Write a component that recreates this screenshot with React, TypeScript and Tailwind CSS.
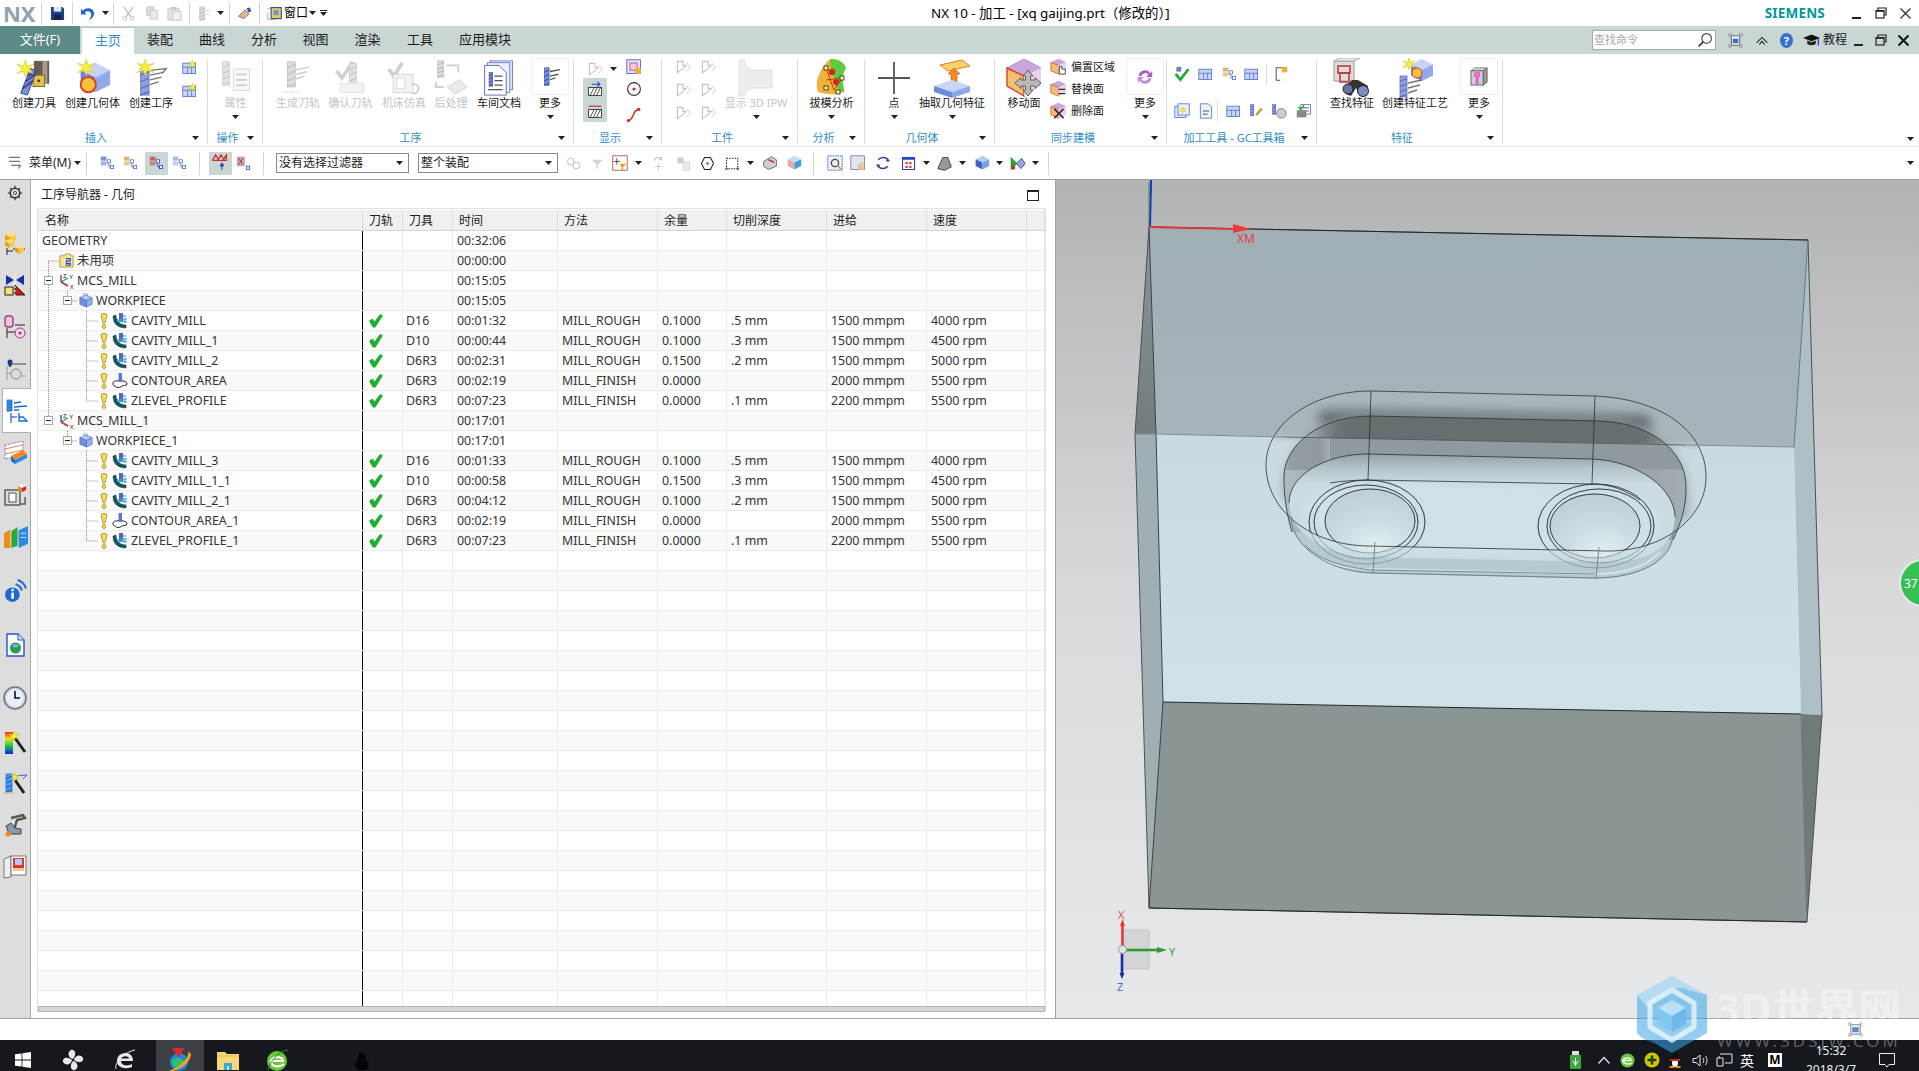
import React from 'react';

const Caret = ({ className = '' }: { className?: string }) => (
  <svg width="7" height="4" viewBox="0 0 7 4" className={`shrink-0 ${className}`}>
    <polygon points="0,0 7,0 3.5,4" fill="#222" />
  </svg>
);

type IcoProps = { s?: number; v?: number; c?: string; children?: React.ReactNode };
const Ico = ({ s = 16, v = 24, c = '', children }: IcoProps) => (
  <svg width={s} height={s} viewBox={`0 0 ${v} ${v}`} className={`block shrink-0 ${c}`}>
    {children}
  </svg>
);

// shared drawing bits
const Burst = ({ x, y, r = 6 }: { x: number; y: number; r?: number }) => (
  <g transform={`translate(${x} ${y})`}>
    <path
      d={`M0 ${-r} L${r * 0.25} ${-r * 0.3} L${r} ${-r * 0.5} L${r * 0.4} 0 L${r} ${r * 0.6} L${r * 0.2} ${r * 0.35} L0 ${r} L${-r * 0.25} ${r * 0.35} L${-r} ${r * 0.6} L${-r * 0.4} 0 L${-r} ${-r * 0.5} L${-r * 0.25} ${-r * 0.3}Z`}
      fill="#f6ee3c"
      stroke="#c9b92c"
      strokeWidth="0.5"
    />
  </g>
);
const Mill = ({ x, y, w = 7, h = 26, tip = '#5a6ab8', body = '#8f9ee0' }: { x: number; y: number; w?: number; h?: number; tip?: string; body?: string }) => (
  <g>
    <rect x={x} y={y} width={w} height={h} fill={body} stroke={tip} strokeWidth="0.7" />
    <path d={`M${x} ${y + h * 0.25} L${x + w} ${y + h * 0.12} M${x} ${y + h * 0.5} L${x + w} ${y + h * 0.37} M${x} ${y + h * 0.75} L${x + w} ${y + h * 0.62} M${x} ${y + h} L${x + w} ${y + h * 0.87}`} stroke={tip} strokeWidth="1.2" />
  </g>
);
const Cuts = ({ x, y, stroke = '#777' }: { x: number; y: number; stroke?: string }) => (
  <path d={`M${x} ${y + 3} L${x + 14} ${y} M${x} ${y + 8} L${x + 12} ${y + 5} M${x} ${y + 13} L${x + 9} ${y + 10}`} stroke={stroke} strokeWidth="1.4" fill="none" />
);
const Cube = ({ x, y, s, top = '#c7d2f6', left = '#6f86d8', right = '#93a7ec' }: { x: number; y: number; s: number; top?: string; left?: string; right?: string }) => (
  <g>
    <polygon points={`${x + s / 2},${y} ${x + s},${y + s * 0.25} ${x + s / 2},${y + s * 0.5} ${x},${y + s * 0.25}`} fill={top} />
    <polygon points={`${x},${y + s * 0.25} ${x + s / 2},${y + s * 0.5} ${x + s / 2},${y + s} ${x},${y + s * 0.75}`} fill={left} />
    <polygon points={`${x + s},${y + s * 0.25} ${x + s / 2},${y + s * 0.5} ${x + s / 2},${y + s} ${x + s},${y + s * 0.75}`} fill={right} />
  </g>
);

// ribbon icons, 40 unit box
const CreateTool = () => (
  <Ico s={38} v={40}>
    <rect x="20" y="2" width="16" height="24" fill="#6a5a52" />
    <rect x="29" y="2" width="5" height="24" fill="#a89a8c" />
    <rect x="19" y="17" width="12" height="12" fill="#e8c04a" stroke="#7a6a2a" />
    <circle cx="25" cy="23" r="1.5" fill="#333" />
    <path d="M6 36 L16 10 L23 12 L13 38Z" fill="#7f90da" stroke="#36468e" />
    <path d="M8 31 L19 23 M11 24 L21 16 M13 18 L22 13" stroke="#36468e" strokeWidth="2" />
    <Burst x={11} y={10} r={9} />
  </Ico>
);
const CreateGeom = () => (
  <Ico s={38} v={40}>
    <Cube x={7} y={4} s={31} />
    <circle cx="15" cy="27" r="8" fill="#f4c23d" stroke="#d8402a" strokeWidth="2" />
    <Burst x={13} y={9} r={9} />
  </Ico>
);
const CreateOp = () => (
  <Ico s={38} v={40}>
    <Mill x={9} y={10} w={9} h={28} />
    <Cuts x={19} y={14} />
    <path d="M19 12 L36 10 L32 15" stroke="#777" fill="none" strokeWidth="1.4" />
    <Burst x={14} y={9} r={9} />
  </Ico>
);
const Props = () => (
  <Ico s={36} v={40} c="opacity-40 grayscale">
    <Mill x={5} y={2} w={8} h={26} tip="#777" body="#bbb" />
    <rect x="17" y="10" width="18" height="24" fill="#eee" stroke="#999" />
    <path d="M20 16h12M20 22h12M20 28h12" stroke="#888" strokeWidth="2" />
  </Ico>
);
const GenPath = () => (
  <Ico s={36} v={40} c="opacity-40 grayscale">
    <Mill x={8} y={2} w={9} h={28} tip="#555" body="#aaa" />
    <Cuts x={18} y={8} />
    <path d="M3 36 L22 36" stroke="#aaa" strokeWidth="2" strokeDasharray="2 2" />
  </Ico>
);
const Verify = () => (
  <Ico s={36} v={40} c="opacity-35 grayscale">
    <path d="M4 12 L10 20 L22 2" stroke="#777" strokeWidth="4" fill="none" />
    <Mill x={18} y={4} w={8} h={26} tip="#555" body="#aaa" />
    <rect x="8" y="26" width="26" height="10" fill="#ddd" stroke="#aaa" />
  </Ico>
);
const Sim = () => (
  <Ico s={36} v={40} c="opacity-35 grayscale">
    <path d="M3 10 L9 18 L18 3" stroke="#777" strokeWidth="4" fill="none" />
    <rect x="8" y="16" width="22" height="20" fill="#ddd" stroke="#888" />
    <rect x="12" y="20" width="9" height="12" fill="#fff" stroke="#888" />
    <path d="M28 28a5 5 0 1 1 0 8" stroke="#777" strokeWidth="2" fill="none" />
  </Ico>
);
const Post = () => (
  <Ico s={36} v={40} c="opacity-40 grayscale">
    <Mill x={5} y={1} w={7} h={18} tip="#555" body="#aaa" />
    <path d="M15 6 H28 V14" stroke="#888" fill="none" strokeWidth="2" />
    <path d="M12 30 H3 V24" stroke="#888" fill="none" strokeWidth="2" />
    <polygon points="16,30 30,22 38,30 24,38" fill="#ccc" stroke="#888" />
  </Ico>
);
const ShopDoc = () => (
  <Ico s={36} v={40}>
    <rect x="10" y="1" width="25" height="32" fill="#dfe5fa" stroke="#6b7bc6" />
    <rect x="7" y="3" width="25" height="33" fill="#eef1fc" stroke="#6b7bc6" />
    <path d="M4 6 H20 L28 14 V39 H4Z" fill="#fff" stroke="#5263b8" />
    <Mill x={9} y={14} w={4} h={15} tip="#3f4fa6" body="#7d8ee0" />
    <path d="M15 18h9M15 23h9M15 28h9M8 33h16" stroke="#555" strokeWidth="1.4" />
  </Ico>
);
const MoreOp = () => (
  <Ico s={22} v={24}>
    <Mill x={6} y={2} w={5} h={19} tip="#3f4fa6" body="#7d8ee0" />
    <path d="M12 6 L23 4 M12 11 L21 9 M12 15 L18 13" stroke="#555" strokeWidth="1.4" />
  </Ico>
);
const Ipw = () => (
  <Ico s={40} v={40} c="opacity-35 grayscale">
    <path d="M3 2 H8 C10 12 18 12 20 12 H36 V30 H20 C14 30 10 32 8 38 H3Z" fill="#ccc" stroke="#aaa" />
  </Ico>
);
const Draft = () => (
  <Ico s={40} v={40}>
    <path d="M18 1 C28 1 32 5 34 10 C28 18 32 28 32 34 C22 38 12 36 6 34 C2 24 8 10 18 1Z" fill="#f2b13a" />
    <path d="M18 1 C28 1 32 5 34 10 C28 18 32 28 32 34 C28 34 22 28 22 20 C20 14 18 8 18 1Z" fill="#5ecb3e" />
    <path d="M14 10 L22 32 L30 20 L14 22" stroke="#a22" fill="none" strokeWidth="0.8" />
    <circle cx="20" cy="14" r="3.2" fill="#d7261e" />
    <circle cx="24" cy="24" r="3" fill="#d7261e" />
    {[[14, 10], [30, 20], [14, 30], [26, 34]].map(([x, y], i) => (
      <rect key={i} x={x - 2} y={y - 2} width="4" height="4" fill="#fff48a" stroke="#222" strokeWidth="0.8" />
    ))}
  </Ico>
);
const PointIco = () => (
  <Ico s={36} v={36}>
    <path d="M18 2 V34 M2 18 H34" stroke="#555" strokeWidth="1.8" />
  </Ico>
);
const Extract = () => (
  <Ico s={40} v={40}>
    <polygon points="8,7 30,2 38,8 16,13" fill="#fbd16e" stroke="#d9822b" />
    <path d="M19 26 V16 H16 L22 10 L28 16 H25 V26Z" fill="#f28a1e" stroke="#b25e10" strokeWidth="0.6" />
    <polygon points="2,28 20,22 38,28 20,34" fill="#c7d6f4" />
    <polygon points="2,28 20,34 20,40 2,34" fill="#6f8bdc" />
    <polygon points="38,28 20,34 20,40 38,34" fill="#8ea6ea" />
  </Ico>
);
const MoveFace = () => (
  <Ico s={40} v={40}>
    <polygon points="20,1 37,10 20,18 3,10" fill="#c9a7dd" stroke="#b58bd0" />
    <polygon points="3,10 20,18 20,38 3,28" fill="#f0c070" stroke="#d9402a" strokeWidth="1.4" />
    <polygon points="37,10 20,18 20,38 37,28" fill="#e9d3f0" />
    <path d="M24 12 L29 18 H26.5 V22 H31 V19.5 L37 25 L31 30.5 V28 H26.5 V32 H29 L24 38 L19 32 H21.5 V28 H17 V30.5 L11 25 L17 19.5 V22 H21.5 V18 H19Z" fill="#b9b9b9" stroke="#555" strokeWidth="0.9" />
  </Ico>
);
const FaceSmall = ({ kind }: { kind: 'hand' | 'swap' | 'x' }) => (
  <Ico s={17} v={20}>
    <polygon points="10,1 19,5 10,9 1,5" fill="#c9a7dd" />
    <polygon points="1,5 10,9 10,19 1,15" fill="#f0c070" stroke="#d9402a" strokeWidth="0.8" />
    <polygon points="19,5 10,9 10,19 19,15" fill="#e9d3f0" />
    {kind === 'hand' && <path d="M11 19 V10 H14 V13 H18 V19Z" fill="#fff" stroke="#333" />}
    {kind === 'swap' && <path d="M10 11 H18 M10 16 H18" stroke="#333" strokeWidth="1.6" />}
    {kind === 'x' && <path d="M5 8 L16 19 M16 8 L5 19" stroke="#333" strokeWidth="2" />}
  </Ico>
);
const Refresh = () => (
  <Ico s={18} v={20}>
    <path d="M3 9 A7 7 0 0 1 16 6 L18 3 V10 H11 L14 7.5 A4.5 4.5 0 0 0 6 9Z" fill="#a95bc9" />
    <path d="M17 11 A7 7 0 0 1 4 14 L2 17 V10 H9 L6 12.5 A4.5 4.5 0 0 0 14 11Z" fill="#c58ae0" />
  </Ico>
);
const FindFeature = () => (
  <Ico s={40} v={40}>
    <rect x="2" y="3" width="20" height="20" fill="#ddd" stroke="#999" />
    <polygon points="2,3 8,0 28,0 22,3" fill="#eee" stroke="#aaa" />
    <rect x="6" y="8" width="12" height="7" fill="none" stroke="#c23a3a" strokeWidth="1.6" />
    <rect x="8" y="15" width="9" height="9" fill="none" stroke="#c23a3a" strokeWidth="1.6" />
    <path d="M12 30 L20 22 H26 L36 28 L35 38 L28 38 L24 30 L19 38 L14 36Z" fill="#333" />
    <circle cx="16" cy="31" r="5" fill="#6673a8" stroke="#222" />
    <circle cx="31" cy="33" r="5.5" fill="#7f8cc4" stroke="#222" />
  </Ico>
);
const CreateFeatureProc = () => (
  <Ico s={40} v={40}>
    <Cube x={16} y={1} s={22} />
    <circle cx="22" cy="15" r="5" fill="#f4c23d" stroke="#d8402a" />
    <Burst x={14} y={6} r={6} />
    <Mill x={5} y={18} w={7} h={21} />
    <Cuts x={13} y={22} />
  </Ico>
);
const MoreFeature = () => (
  <Ico s={19} v={20}>
    <polygon points="1,4 5,1 18,1 14,4" fill="#ddd" stroke="#777" />
    <rect x="1" y="4" width="13" height="15" fill="#cfcfcf" stroke="#666" />
    <polygon points="14,4 18,1 18,16 14,19" fill="#9a9a9a" stroke="#666" />
    <path d="M5 6 H10 V10 H8.5 V18 H6.5 V10 H5Z" fill="#ff70e0" stroke="#d820c0" strokeWidth="0.6" />
  </Ico>
);

// small ribbon and toolbar icons
const TinyTree = ({ a = '#4f6fd0', b = '#4f6fd0' }: { a?: string; b?: string }) => (
  <Ico s={16} v={20}>
    <rect x="1" y="2" width="7" height="5" fill={a} opacity=".75" />
    <rect x="1" y="8" width="7" height="5" fill={a} opacity=".55" />
    <rect x="9" y="6" width="4" height="4" fill="#fff" stroke={b} />
    <rect x="13" y="13" width="4" height="4" fill="#fff" stroke={b} />
    <path d="M11 10 V15 H13" stroke={b} fill="none" />
  </Ico>
);
const Block = ({ s = 16, star = false }: { s?: number; star?: boolean }) => (
  <Ico s={s} v={20}>
    <rect x="1" y="4" width="16" height="13" fill="#c9d6f2" stroke="#4f6fd0" />
    <path d="M1 9h16M7 9v8M12 9v8" stroke="#4f6fd0" />
    {star && <Burst x={13} y={5} r={5} />}
  </Ico>
);
const Flag = ({ c = '#888' }: { c?: string }) => (
  <Ico s={16} v={20} c="opacity-50">
    <path d="M3 3 H10 V8 H14 L10 12 L3 17Z" fill="none" stroke={c} strokeWidth="1.4" />
    <path d="M15 5 L19 10 L15 15" stroke={c} fill="none" />
  </Ico>
);
const Row = ({ children, on = false }: { children: React.ReactNode; on?: boolean }) => (
  <div className={`flex h-[22px] w-[24px] items-center justify-center ${on ? 'bg-[#c8d6d4]' : ''}`}>{children}</div>
);

const Group = ({ w, label, arrow = true, children }: { w: string; label: string; arrow?: boolean; children: React.ReactNode }) => (
  <div className={`flex h-[85px] shrink-0 flex-col border-r border-[#dcdcdc] ${w}`}>
    <div className="flex h-[71px]">{children}</div>
    <div className="flex h-[14px] items-center">
      <span className="flex-1 whitespace-nowrap text-center text-[11px] leading-[16px] text-[#2d8fc6] pt-[2px]">{label}</span>
      {arrow && <Caret className="mr-[8px] mt-[2px]" />}
    </div>
  </div>
);

const Big = ({ w, label, off = false, caret = false, boxed = false, children }: { w: string; label: string; off?: boolean; caret?: boolean; boxed?: boolean; children: React.ReactNode }) => (
  <div className={`flex shrink-0 flex-col items-center ${w}`}>
    <div className={`flex h-[37px] items-center justify-center ${boxed ? 'w-[38px] h-[36px] rounded-[3px] border border-[#eeeeee] mb-[1px] -mt-[1px]' : ''}`}>{children}</div>
    <div className={`h-[14px] whitespace-nowrap text-[11px] leading-[14px] ${off ? 'text-[#c4c4c4]' : 'text-[#1a1a1a]'}`}>{label}</div>
    <div className="flex h-[14px] items-center">{caret && <Caret />}</div>
  </div>
);

const Ribbon = () => (
  <div className="flex h-[93px] border-b border-[#e2e2e2] bg-white pt-[5px]">
    <Group w="w-[208px]" label="插入">
      <div className="w-[5px]" />
      <Big w="w-[58px]" label="创建刀具"><CreateTool /></Big>
      <Big w="w-[59px]" label="创建几何体"><CreateGeom /></Big>
      <Big w="w-[58px]" label="创建工序"><CreateOp /></Big>
      <div className="flex w-[20px] flex-col items-center gap-[7px] pt-[1px]">
        <Block star />
        <Block star />
      </div>
    </Group>
    <Group w="w-[55px]" label="操作">
      <Big w="w-[55px]" label="属性" off caret><Props /></Big>
    </Group>
    <Group w="w-[311px]" label="工序">
      <div className="w-[9px]" />
      <Big w="w-[52px]" label="生成刀轨" off><GenPath /></Big>
      <Big w="w-[53px]" label="确认刀轨" off><Verify /></Big>
      <Big w="w-[54px]" label="机床仿真" off><Sim /></Big>
      <Big w="w-[40px]" label="后处理" off><Post /></Big>
      <Big w="w-[56px]" label="车间文档"><ShopDoc /></Big>
      <Big w="w-[46px]" label="更多" caret boxed><MoreOp /></Big>
    </Group>
    <Group w="w-[88px]" label="显示">
      <div className="w-[9px]" />
      <div className="flex w-[24px] flex-col">
        <div className="flex h-[19px] items-center justify-center"><Flag /></div>
        <Row on>
          <Ico s={16} v={20}><rect x="2" y="8" width="16" height="10" fill="#fff" stroke="#222" /><path d="M4 18 L9 8 M8 18 L13 8 M12 18 L17 8" stroke="#222" /><path d="M6 4 H16 M13 1 L16 4 L13 7" stroke="#2346c0" fill="none" strokeWidth="1.4" /></Ico>
        </Row>
        <Row on>
          <Ico s={16} v={20}><rect x="2" y="8" width="16" height="10" fill="#fff" stroke="#222" /><path d="M4 18 L9 8 M8 18 L13 8 M12 18 L17 8" stroke="#222" /><path d="M2 4 H18" stroke="#d02a2a" strokeWidth="1.4" /></Ico>
        </Row>
      </div>
      <Caret className="mt-[8px] ml-[3px]" />
      <div className="ml-[5px] flex w-[24px] flex-col items-center gap-[6px]">
        <Ico s={16} v={20}><rect x="1" y="1" width="17" height="17" fill="#dfe6fb" stroke="#3c55c4" /><rect x="5" y="5" width="9" height="9" fill="#f6c8d8" stroke="#c23a7a" /><circle cx="15" cy="15" r="4" fill="#e8b03c" /></Ico>
        <Ico s={16} v={20}><circle cx="10" cy="10" r="8" fill="#fff" stroke="#333" strokeWidth="1.4" /><circle cx="10" cy="10" r="2" fill="#d02a2a" /></Ico>
        <Ico s={16} v={20} c="mt-[4px]"><path d="M3 17 C10 17 8 3 16 3" stroke="#b5451f" strokeWidth="2" fill="none" /><circle cx="3" cy="17" r="2" fill="#d02a2a" /><circle cx="16" cy="3" r="2" fill="#d02a2a" /></Ico>
      </div>
    </Group>
    <Group w="w-[136px]" label="工件">
      <div className="w-[11px]" />
      <div className="flex w-[20px] flex-col items-center gap-[7px]"><Flag /><Flag /><Flag /></div>
      <div className="ml-[5px] flex w-[20px] flex-col items-center gap-[7px]"><Flag /><Flag /><Flag /></div>
      <Big w="w-[76px]" label="显示 3D IPW" off caret><Ipw /></Big>
    </Group>
    <Group w="w-[67px]" label="分析">
      <Big w="w-[67px]" label="拔模分析" caret><Draft /></Big>
    </Group>
    <Group w="w-[130px]" label="几何体">
      <div className="w-[6px]" />
      <Big w="w-[46px]" label="点" caret><PointIco /></Big>
      <Big w="w-[70px]" label="抽取几何特征" caret><Extract /></Big>
    </Group>
    <Group w="w-[172px]" label="同步建模">
      <div className="w-[3px]" />
      <Big w="w-[52px]" label="移动面"><MoveFace /></Big>
      <div className="-mt-[1px] flex w-[72px] flex-col gap-[5px]">
        {([['hand', '偏置区域'], ['swap', '替换面'], ['x', '删除面']] as const).map(([k, t]) => (
          <div key={t} className="flex items-center gap-[4px] text-[11px] leading-[17px] text-[#1a1a1a]">
            <FaceSmall kind={k} />
            <span>{t}</span>
          </div>
        ))}
      </div>
      <div className="w-[4px]" />
      <Big w="w-[38px]" label="更多" caret boxed><Refresh /></Big>
    </Group>
    <Group w="w-[150px]" label="加工工具 - GC工具箱">
      <div className="flex flex-col gap-[17px] pl-[7px] pt-[5px]">
        <div className="flex items-center">
          <Ico s={16} v={20}><path d="M2 10 L8 17 L18 4" stroke="#27a83a" strokeWidth="3.4" fill="none" /><rect x="3" y="1" width="6" height="6" fill="#6b7bc6" /></Ico>
          <div className="ml-[8px]"><Block /></div>
          <div className="ml-[8px]"><TinyTree a="#c9a23c" /></div>
          <div className="ml-[6px]"><Block /></div>
          <div className="ml-[6px] h-[20px] w-px bg-[#dddddd]" />
          <div className="ml-[6px]"><Ico s={16} v={20}><path d="M4 2 V18 M4 2 H12 M4 18 H9" stroke="#777" strokeWidth="1.6" /><rect x="11" y="1" width="7" height="7" fill="#e8b03c" /></Ico></div>
        </div>
        <div className="flex items-center">
          <Ico s={16} v={20}><rect x="1" y="4" width="14" height="14" fill="#dfe6fb" stroke="#4f6fd0" /><rect x="5" y="1" width="14" height="14" fill="#eef1fc" stroke="#4f6fd0" /><Burst x={11} y={9} r={4} /></Ico>
          <div className="ml-[8px]"><Ico s={16} v={20}><path d="M3 1 H13 L17 5 V19 H3Z" fill="#eef1fc" stroke="#4f6fd0" /><path d="M6 10h8M6 14h6" stroke="#333" /></Ico></div>
          <div className="ml-[3px] h-[20px] w-px bg-[#dddddd]" />
          <div className="ml-[8px]"><Block /></div>
          <div className="ml-[7px]"><Ico s={16} v={20}><Mill x={2} y={2} w={4} h={14} /><path d="M9 15 L16 7" stroke="#c79a2c" strokeWidth="3" /></Ico></div>
          <div className="ml-[6px]"><Ico s={16} v={20}><Mill x={2} y={2} w={4} h={12} /><circle cx="13" cy="13" r="6" fill="#ccc" stroke="#777" /></Ico></div>
          <div className="ml-[9px]"><Ico s={16} v={20}><rect x="6" y="2" width="12" height="12" fill="#fff" stroke="#4f6fd0" /><path d="M8 6h8M8 10h8" stroke="#333" /><rect x="1" y="9" width="12" height="9" fill="#888" /><path d="M3 5 L6 8 L10 3" stroke="#27a83a" strokeWidth="2" fill="none" /></Ico></div>
        </div>
      </div>
    </Group>
    <Group w="w-[186px]" label="特征">
      <div className="w-[9px]" />
      <Big w="w-[52px]" label="查找特征"><FindFeature /></Big>
      <Big w="w-[74px]" label="创建特征工艺"><CreateFeatureProc /></Big>
      <div className="w-[8px]" />
      <Big w="w-[38px]" label="更多" caret boxed><MoreFeature /></Big>
    </Group>
    <div className="flex flex-1 items-end justify-end pb-[5px] pr-[5px]"><Caret /></div>
  </div>
);

const Sep = () => <div className="h-[23px] w-px shrink-0 bg-[#d4d4d4]" />;

const TitleBar = () => (
  <div className="relative flex h-[26px] items-center bg-white">
    <span className="ml-[3px] w-[38px] text-[22px] font-bold leading-[26px] tracking-[-0.2px] text-[#8fa3af]">NX</span>
    <Sep />
    <div className="flex w-[30px] justify-center">
      <Ico s={15} v={16}><path d="M1 1 H13 L15 3 V15 H1Z" fill="#1f3f86" /><rect x="4" y="1" width="8" height="5" fill="#dfe6f6" /><rect x="4" y="9" width="8" height="6" fill="#15264f" /></Ico>
    </div>
    <Sep />
    <div className="flex w-[29px] justify-center">
      <Ico s={15} v={16}><path d="M1 3 V9 H7 L5 7 C8 4 12 6 12 9 C12 11 11 13 9 15 C13 14 15 11 15 8 C15 3 8 0 3 5Z" fill="#2566c8" /></Ico>
    </div>
    <Caret className="mr-[4px]" />
    <Sep />
    <div className="flex w-[28px] justify-center">
      <Ico s={15} v={16} c="opacity-40"><path d="M3 1 L11 12 M13 1 L5 12" stroke="#666" strokeWidth="1.4" /><circle cx="4" cy="13" r="2" fill="none" stroke="#666" /><circle cx="12" cy="13" r="2" fill="none" stroke="#666" /></Ico>
    </div>
    <div className="flex w-[20px] justify-center">
      <Ico s={14} v={16} c="opacity-40"><rect x="2" y="1" width="8" height="10" fill="#aaa" stroke="#777" /><rect x="6" y="5" width="8" height="10" fill="#ccc" stroke="#777" /></Ico>
    </div>
    <div className="flex w-[24px] justify-center">
      <Ico s={15} v={16} c="opacity-40"><rect x="1" y="3" width="12" height="12" fill="#bbb" stroke="#777" /><rect x="6" y="6" width="9" height="9" fill="#ddd" stroke="#777" /><rect x="4" y="1" width="6" height="3" fill="#777" /></Ico>
    </div>
    <div className="w-[3px]" />
    <Sep />
    <div className="flex w-[26px] justify-center"><Ico s={15} v={16} c="opacity-40"><Mill x={4} y={1} w={5} h={14} tip="#666" body="#aaa" /><path d="M10 5h5M10 9h4" stroke="#888" /></Ico></div>
    <Caret className="ml-[1px] mr-[5px]" />
    <Sep />
    <div className="flex w-[29px] justify-center">
      <Ico s={16} v={20}><path d="M2 14 L10 6 L15 11 L9 17Z" fill="#dcb98c" stroke="#7a5a3a" /><path d="M12 4 L16 3 L18 8 L14 9Z" fill="#2f56b8" /></Ico>
    </div>
    <Sep />
    <div className="ml-[6px]">
      <Ico s={17} v={20}><path d="M2 4 H12 M2 9 V17 H12" stroke="#888" strokeDasharray="2 1" fill="none" /><rect x="6" y="3" width="12" height="13" fill="#f6c94a" stroke="#2f56b8" strokeWidth="1.4" /><rect x="9" y="6" width="6" height="6" fill="#5f9be8" /></Ico>
    </div>
    <span className="ml-[1px] text-[12px] text-black">窗口</span>
    <Caret className="ml-[1px]" />
    <svg width="7" height="6" viewBox="0 0 7 6" className="ml-[4px]"><path d="M0 .5 H7" stroke="#222" /><polygon points="0,2 7,2 3.5,6" fill="#222" /></svg>
    <span className="absolute left-[931px] top-[3px] whitespace-nowrap font-['Noto_Sans','Noto_Sans_CJK_TC',sans-serif] text-[13.4px] leading-[20px] text-black">NX 10 - 加工 - [xq gaijing.prt（修改的）]</span>
    <span className="ml-auto mr-[26px] text-[13.5px] font-bold leading-[26px] tracking-[0.2px] text-[#009999]">SIEMENS</span>
    <WinBtns light />
  </div>
);

const WinBtns = ({ light = false }: { light?: boolean }) => (
  <div className={`flex items-center ${light ? 'gap-[12px] pr-[7px]' : 'gap-[10px] pr-[9px]'}`}>
    <svg width="12" height="12" viewBox="0 0 12 12"><path d="M1 11 H10" stroke="#222" strokeWidth="2" /></svg>
    <svg width="12" height="12" viewBox="0 0 12 12"><path d="M3 3 V1 H11 V8 H9" fill="none" stroke="#222" strokeWidth="1.2" /><rect x="1" y="3.6" width="8" height="7.4" fill="none" stroke="#222" strokeWidth="1.2" /><path d="M1 4 H9" stroke="#222" strokeWidth="1.6" /></svg>
    <svg width="13" height="13" viewBox="0 0 13 13"><path d="M1.5 1.5 L11.5 11.5 M11.5 1.5 L1.5 11.5" stroke={light ? '#333' : '#111'} strokeWidth={light ? 1.3 : 1.9} /></svg>
  </div>
);

const TabBar = () => {
  const tabs: [string, string][] = [
    ['装配', 'w-[52px]'],
    ['曲线', 'w-[52px]'],
    ['分析', 'w-[52px]'],
    ['视图', 'w-[51px]'],
    ['渲染', 'w-[53px]'],
    ['工具', 'w-[52px]'],
    ['应用模块', 'w-[78px]'],
  ];
  return (
    <div className="flex h-[28px] items-stretch bg-[#c8d6d4] text-[13px]">
      <div className="flex w-[80px] items-center justify-center bg-[#5c8a84] text-white">文件(F)</div>
      <div className="w-[2px]" />
      <div className="mt-px flex w-[52px] items-center justify-center border-t border-[#b9c5c3] bg-white text-[#2d8fc6]">主页</div>
      {tabs.map(([t, w]) => (
        <div key={t} className={`flex items-center justify-center text-[#1a1a1a] ${w}`}>{t}</div>
      ))}
      <div className="ml-auto flex items-center">
        <div className="flex h-[20px] w-[124px] items-center justify-between border border-[#a9a9a9] bg-white pl-[1px] pr-[2px] text-[11px] text-[#a8a8a8]">
          <span>查找命令</span>
          <Ico s={16} v={20}><circle cx="12" cy="8" r="6" fill="#fff" stroke="#444" strokeWidth="1.4" /><path d="M8 12 L2 18" stroke="#444" strokeWidth="2.4" /></Ico>
        </div>
        <div className="ml-[12px]"><Ico s={15} v={16}><path d="M1 4 V1 H4 M12 1 H15 V4 M15 12 V15 H12 M4 15 H1 V12" stroke="#888" fill="none" /><rect x="3.5" y="3" width="9" height="10" fill="#fff" stroke="#555" /><rect x="5" y="6" width="6" height="5" fill="#3a70c8" /></Ico></div>
        <div className="ml-[12px]"><Ico s={14} v={16}><path d="M2 11 L8 5 L14 11 M5 13 L8 9.5 L11 13" stroke="#222" strokeWidth="1.2" fill="none" /></Ico></div>
        <div className="ml-[11px] flex h-[15px] w-[13px] items-center justify-center rounded-[50%] bg-[#3a6fd0] text-[11px] font-bold leading-none text-white">?</div>
        <div className="ml-[10px]"><Ico s={17} v={20}><path d="M0 7 L10 3 L20 7 L10 11Z" fill="#111" /><path d="M5 10 V14 C8 16 12 16 15 14 V10 L10 12Z" fill="#222" /><path d="M18 7 V16" stroke="#1c3fd0" strokeWidth="1.5" /></Ico></div>
        <span className="ml-[3px] text-[12px] text-[#1a1a1a]">教程</span>
        <div className="ml-[6px]"><WinBtns /></div>
      </div>
    </div>
  );
};

const Hi = ({ children }: { children: React.ReactNode }) => (
  <div className="flex h-[23px] w-[23px] items-center justify-center bg-[#c8d6d4]">{children}</div>
);

const Combo = ({ w, text }: { w: string; text: string }) => (
  <div className={`flex h-[20px] items-center justify-between border border-[#8a8a8a] bg-white pl-[2px] pr-[5px] text-[12px] text-[#1a1a1a] ${w}`}>
    <span>{text}</span>
    <Caret />
  </div>
);

const Slot = ({ w, children, c = '' }: { w: string; children?: React.ReactNode; c?: string }) => (
  <div className={`flex shrink-0 items-center justify-center ${w} ${c}`}>{children}</div>
);

const Toolbar = () => (
  <div className="flex h-[33px] items-center border-b border-[#9f9f9f] bg-white">
    <div className="w-[8px]" />
    <Ico s={16} v={20}><path d="M1 3 H15 M1 8 H15 M4 13 H13" stroke="#777" strokeWidth="1.6" /><path d="M13 11 L17 13 L13 18Z" fill="#888" /></Ico>
    <span className="ml-[5px] text-[12px] text-[#1a1a1a]">菜单(M)</span>
    <Caret className="ml-[3px]" />
    <div className="w-[5px]" />
    <Sep />
    <div className="ml-[13px]"><TinyTree /></div>
    <div className="ml-[7px]"><TinyTree a="#c9a23c" /></div>
    <div className="ml-[6px]"><Hi><TinyTree a="#d23a3a" b="#2346c0" /></Hi></div>
    <div className="ml-[4px]"><TinyTree a="#8fa3e0" /></div>
    <div className="w-[11px]" />
    <Sep />
    <div className="ml-[9px]"><Hi><Ico s={18} v={20}><path d="M1 6 L4 1 L7 6 L10 1 L13 6 L16 1 V7 H1Z" fill="none" stroke="#d02a2a" strokeWidth="1.4" /><path d="M11 9 V18" stroke="#2346c0" /><rect x="9" y="11" width="4" height="3" fill="#2346c0" /></Ico></Hi></div>
    <div className="ml-[4px]"><Ico s={16} v={20}><rect x="1" y="2" width="10" height="12" fill="#b87a8a" opacity=".7" /><path d="M3 4 L9 12 M9 4 L3 12" stroke="#8a2a3a" /><rect x="13" y="14" width="4" height="4" fill="#fff" stroke="#2346c0" /></Ico></div>
    <div className="w-[11px]" />
    <Sep />
    <div className="w-[12px]" />
    <Combo w="w-[133px]" text="没有选择过滤器" />
    <div className="w-[9px]" />
    <Combo w="w-[140px]" text="整个装配" />
    <div className="w-[8px]" />
    <Ico s={16} v={20} c="opacity-35"><circle cx="6" cy="8" r="4" fill="none" stroke="#666" strokeWidth="1.4" /><circle cx="13" cy="13" r="4" fill="none" stroke="#666" strokeWidth="1.4" /></Ico>
    <div className="w-[8px]" /><Ico s={16} v={20} c="opacity-35"><path d="M2 6 H16 L10 12 V18 L8 16 V12Z" fill="#888" /></Ico>
    <div className="w-[6px]" />
    <Ico s={16} v={20}><rect x="1" y="1" width="18" height="18" fill="#fff" stroke="#c43a3a" /><path d="M6 4 V12 M2 8 H10" stroke="#333" /><path d="M9 11 H18 L14 15 V19 H12 V15Z" fill="#e8a020" /></Ico>
    <Caret className="ml-[7px]" />
    <div className="w-[9px]" />
    <Ico s={15} v={20} c="opacity-40"><path d="M4 6 C6 1 12 1 14 5 M14 1 V5 H10" stroke="#666" fill="none" strokeWidth="1.4" /><path d="M10 9 V19 M5 14 H15" stroke="#666" /></Ico>
    <div className="w-[10px]" /><Ico s={15} v={20} c="opacity-40"><rect x="2" y="2" width="8" height="8" fill="#888" /><rect x="10" y="8" width="8" height="11" fill="#ccc" stroke="#888" /></Ico>
    <div className="w-[9px]" /><Ico s={15} v={20}><polygon points="6,2 14,2 18,10 14,18 6,18 2,10" fill="#fff" stroke="#222" strokeWidth="1.4" /><circle cx="10" cy="10" r="1.6" fill="#d02a2a" /></Ico>
    <div className="w-[10px]" /><Ico s={15} v={20}><rect x="2" y="3" width="15" height="14" fill="none" stroke="#222" strokeDasharray="2 1.6" strokeWidth="1.4" /><circle cx="17" cy="17" r="1.6" fill="#d02a2a" /><circle cx="2" cy="17" r="1.6" fill="#d02a2a" /></Ico>
    <Caret className="ml-[7px]" />
    <div className="w-[8px]" /><Ico s={16} v={20}><polygon points="2,8 12,2 18,6 18,14 8,18 2,14" fill="#cfcfcf" stroke="#555" /><path d="M8 6 L15 9" stroke="#c23a3a" strokeWidth="2" /></Ico>
    <div className="w-[8px]" /><Ico s={16} v={20}><Cube x={2} y={1} s={17} top="#bfe0f6" left="#e8a8a8" right="#4a98de" /></Ico>
    <div className="w-[11px]" />
    <Sep />
    <div className="w-[13px]" />
    <Ico s={16} v={20}><rect x="1" y="1" width="18" height="18" fill="#eef1fc" stroke="#2346c0" strokeDasharray="2 1" /><circle cx="10" cy="10" r="4.5" fill="none" stroke="#444" strokeWidth="1.6" /><path d="M13 13 L18 18" stroke="#c9a23c" strokeWidth="2" /></Ico>
    <div className="w-[7px]" /><Ico s={16} v={20}><rect x="1" y="1" width="17" height="17" fill="#dfe5f2" stroke="#778" /><path d="M10 18 V11 H13 V9 H17 V19Z" fill="#e8c39a" /></Ico>
    <div className="w-[9px]" /><Ico s={16} v={20}><path d="M4 6 A8 8 0 0 1 17 7 L14 7 M16 14 A8 8 0 0 1 3 13 L6 13" fill="none" stroke="#33488e" strokeWidth="2" /></Ico>
    <div className="w-[10px]" /><Ico s={15} v={20}><rect x="2" y="2" width="16" height="16" fill="#fff" stroke="#2346c0" strokeWidth="1.4" /><rect x="2" y="2" width="16" height="3" fill="#2346c0" /><path d="M6 8h3v3H6zM11 8h3v3h-3zM6 13h3v3H6zM11 13h3v3h-3z" fill="#e03a2a" /></Ico>
    <Caret className="ml-[7px]" />
    <div className="w-[6px]" /><Ico s={17} v={20}><polygon points="2,16 8,3 14,3 18,14 10,18" fill="#999" stroke="#333" /></Ico>
    <Caret className="ml-[6px]" />
    <div className="w-[8px]" /><Ico s={16} v={20}><Cube x={2} y={1} s={17} top="#b7cdf2" left="#3f64c0" right="#7aa0e8" /></Ico>
    <Caret className="ml-[6px]" />
    <div className="w-[6px]" /><Ico s={17} v={20}><path d="M2 2 V18 L10 10Z" fill="#2ba03a" /><path d="M9 10 L15 4 L19 10 L14 16Z" fill="#8fa8e8" stroke="#445" /><circle cx="5" cy="15" r="2.4" fill="#d02a2a" /></Ico>
    <Caret className="ml-[6px]" />
    <div className="w-[9px]" />
    <Sep />
    <div className="ml-auto pr-[5px]"><Caret /></div>
  </div>
);

// left resource bar
const railItems: { h: string; node: React.ReactNode; on?: boolean }[] = [
  { h: 'h-[24px]', node: <Ico s={16} v={20}><circle cx="10" cy="10" r="6" fill="none" stroke="#333" strokeWidth="2" /><circle cx="10" cy="10" r="2" fill="none" stroke="#333" /><path d="M10 1v3M10 16v3M1 10h3M16 10h3M4 4l2 2M14 14l2 2M16 4l-2 2M4 16l2-2" stroke="#333" strokeWidth="1.5" /></Ico> },
  { h: 'mt-[17px] h-[42px]', node: <Ico s={24} v={24}><Cube x={2} y={1} s={11} top="#fbe27a" left="#e8a020" right="#f6c94a" /><Cube x={2} y={8} s={9} top="#fbe27a" left="#e8a020" right="#f6c94a" /><path d="M10 18 H22 M4 17 V24 M4 20 H10" stroke="#222" /><Cube x={12} y={14} s={9} top="#fbe27a" left="#e8a020" right="#f6c94a" /></Ico> },
  { h: 'h-[42px]', node: <Ico s={24} v={24}><path d="M3 2 L11 7 L3 12Z M21 2 L13 7 L21 12Z" fill="#1432a8" /><rect x="2" y="14" width="8" height="8" fill="#f6e27a" stroke="#222" /><path d="M12 22 L12 12 L22 22Z" fill="#cc1a10" stroke="#222" /><path d="M12 1 V24" stroke="#fff" strokeDasharray="2 2" /></Ico> },
  { h: 'h-[42px]', node: <Ico s={24} v={24}><rect x="2" y="1" width="8" height="11" rx="3" fill="#e8c8d8" stroke="#a03a7a" strokeWidth="1.4" /><path d="M12 10 H22 M4 13 V23 M4 17 H12" stroke="#222" /><circle cx="17" cy="18" r="5" fill="#f6d8e8" stroke="#a03a7a" /><circle cx="17" cy="18" r="1.6" fill="#a03a7a" /></Ico> },
  { h: 'mt-[4px] h-[36px]', node: <Ico s={24} v={24}><circle cx="7" cy="4" r="2.5" fill="#1432a8" /><path d="M5 6 H9 L7 9Z M9 6 H23" stroke="#444" fill="#1432a8" /><path d="M4 8 V22 M4 15 H8" stroke="#999" /><circle cx="13" cy="16" r="5" fill="#ddd" stroke="#888" /><path d="M17 18 H23" stroke="#aaa" /></Ico> },
  { h: 'h-[45px]', on: true, node: <Ico s={24} v={24}><Mill x={2} y={1} w={5} h={11} tip="#1a6ad0" body="#4a9ae8" /><path d="M9 4 L16 3 M9 8 L22 7 M9 11 H14" stroke="#1a6ad0" strokeWidth="1.4" /><path d="M6 14 V24 M6 18 H12" stroke="#1432a8" /><path d="M14 14 V22 H22 L18 18 H14" fill="none" stroke="#1a6ad0" strokeWidth="1.4" /></Ico> },
  { h: 'h-[40px]', node: <Ico s={24} v={24}><path d="M2 4 L20 0 V14 L2 18Z" fill="#fff" stroke="#8a6ad0" strokeDasharray="2 1" /><path d="M2 8 L20 4 M2 13 L20 9" stroke="#e6875a" /><polygon points="8,15 20,9 24,13 12,19" fill="#f28a1e" /><polygon points="8,15 12,19 12,23 8,20" fill="#1a6ad0" /><polygon points="12,19 24,13 24,17 12,23" fill="#2b8ae8" /></Ico> },
  { h: 'h-[44px]', node: <Ico s={24} v={24}><rect x="2" y="7" width="15" height="15" fill="#dcdcdc" stroke="#555" strokeWidth="1.4" /><rect x="6" y="10" width="7" height="9" fill="#fff" stroke="#555" /><Cube x={15} y={1} s={8} top="#fff" left="#f28a1e" right="#d02a2a" /><path d="M22 14 V21 H18" stroke="#555" fill="none" strokeWidth="1.4" /></Ico> },
  { h: 'h-[40px]', node: <Ico s={25} v={24}><path d="M1 8 L7 4 V22 H1Z" fill="#f28a1e" /><path d="M8 6 L14 2 V20 L8 22Z" fill="#2ca83a" /><path d="M15 5 L24 1 V18 L15 22Z" fill="#2b8ae8" /><path d="M17 8 H22 M17 12 H22" stroke="#cfe8ff" /></Ico> },
  { h: 'mt-[12px] h-[42px]', node: <Ico s={25} v={24}><circle cx="9" cy="16" r="7" fill="#1a6ad0" /><rect x="8" y="14" width="2.4" height="6" fill="#fff" /><circle cx="9.2" cy="11.6" r="1.3" fill="#fff" /><path d="M12 6 A8 8 0 0 1 18 12 M14 2 A12 12 0 0 1 22 10" stroke="#2b6ad0" strokeWidth="2" fill="none" /></Ico> },
  { h: 'mt-[13px] h-[42px]', node: <Ico s={24} v={24}><path d="M4 1 H15 L21 7 V23 H4Z" fill="#fff" stroke="#2456c8" strokeWidth="1.4" /><path d="M15 1 V7 H21" fill="#cfe0fa" stroke="#2456c8" /><circle cx="12.5" cy="15" r="5.5" fill="#2b9a4a" /><path d="M9 13 C11 10 15 11 16 13 C14 15 11 15 9 13" fill="#6ab4e8" /></Ico> },
  { h: 'mt-[11px] h-[42px]', node: <Ico s={24} v={24}><circle cx="12" cy="12" r="11" fill="#c8d8f0" stroke="#777" strokeWidth="1.6" /><circle cx="12" cy="12" r="8.6" fill="#e8f0fc" /><path d="M12 5 V12 H17" stroke="#111" strokeWidth="1.6" fill="none" /></Ico> },
  { h: 'mt-[3px] h-[42px]', node: <svg width="24" height="24" viewBox="0 0 24 24" className="block"><defs><linearGradient id="rainbow" x1="0" x2="0" y1="0" y2="1"><stop offset="0" stopColor="#f02020" /><stop offset=".3" stopColor="#f0e020" /><stop offset=".6" stopColor="#20d040" /><stop offset="1" stopColor="#1020e0" /></linearGradient></defs><rect x="2" y="1" width="8" height="22" fill="url(#rainbow)" /><path d="M12 7 L22 21" stroke="#222" strokeWidth="3" /><Burst x={11} y={5} r={5} /></svg> },
  { h: 'h-[40px]', node: <Ico s={24} v={24}><Mill x={3} y={2} w={6} h={18} tip="#1a6ad0" body="#4a9ae8" /><path d="M10 4 L24 3 L20 7" stroke="#2b6ad0" fill="none" /><path d="M12 8 L21 21" stroke="#222" strokeWidth="3" /><Burst x={12} y={5} r={4} /><path d="M1 21 H12" stroke="#e8c020" strokeDasharray="2 1" /></Ico> },
  { h: 'h-[42px]', node: <Ico s={24} v={24}><path d="M8 5 L20 2 L22 5 L14 7 L10 20" stroke="#555" strokeWidth="2.4" fill="none" /><path d="M3 13 L8 10 L12 15 L18 16 L18 21 L6 21Z" fill="#8a9aa8" stroke="#444" /><circle cx="5" cy="21" r="2.6" fill="#f28a1e" /></Ico> },
  { h: 'h-[42px]', node: <Ico s={24} v={24}><path d="M1 4 L8 1 V22 L1 23Z" fill="#eee" stroke="#777" /><rect x="8" y="1" width="15" height="19" fill="#fff" stroke="#777" /><rect x="10" y="3" width="11" height="12" fill="#e83030" /><rect x="12" y="4" width="7" height="6" fill="#a8d0f0" /><rect x="10" y="13" width="11" height="3" fill="#f0c890" /></Ico> },
];

const Rail = () => (
  <div className="flex w-[31px] shrink-0 flex-col border-r border-[#a8a8a8] bg-[#dddddd] pt-[1px]">
    {railItems.map((item, i) => (
      <div key={i} className={`flex shrink-0 items-center justify-center ${item.h} ${item.on ? 'ml-[2px] -mr-px bg-white border-y border-l border-[#b0b0b0]' : ''}`}>
        {item.node}
      </div>
    ))}
  </div>
);

type TreeRow = {
  name?: string;
  kind?: 'root' | 'unused' | 'mcs' | 'wp' | 'op' | 'contour';
  tool?: string;
  time?: string;
  method?: string;
  stock?: string;
  depth?: string;
  feed?: string;
  speed?: string;
};

const rough = 'MILL_ROUGH';
const finish = 'MILL_FINISH';
const rows: TreeRow[] = [
  { name: 'GEOMETRY', kind: 'root', time: '00:32:06' },
  { name: '未用项', kind: 'unused', time: '00:00:00' },
  { name: 'MCS_MILL', kind: 'mcs', time: '00:15:05' },
  { name: 'WORKPIECE', kind: 'wp', time: '00:15:05' },
  { name: 'CAVITY_MILL', kind: 'op', tool: 'D16', time: '00:01:32', method: rough, stock: '0.1000', depth: '.5 mm', feed: '1500 mmpm', speed: '4000 rpm' },
  { name: 'CAVITY_MILL_1', kind: 'op', tool: 'D10', time: '00:00:44', method: rough, stock: '0.1000', depth: '.3 mm', feed: '1500 mmpm', speed: '4500 rpm' },
  { name: 'CAVITY_MILL_2', kind: 'op', tool: 'D6R3', time: '00:02:31', method: rough, stock: '0.1500', depth: '.2 mm', feed: '1500 mmpm', speed: '5000 rpm' },
  { name: 'CONTOUR_AREA', kind: 'contour', tool: 'D6R3', time: '00:02:19', method: finish, stock: '0.0000', feed: '2000 mmpm', speed: '5500 rpm' },
  { name: 'ZLEVEL_PROFILE', kind: 'op', tool: 'D6R3', time: '00:07:23', method: finish, stock: '0.0000', depth: '.1 mm', feed: '2200 mmpm', speed: '5500 rpm' },
  { name: 'MCS_MILL_1', kind: 'mcs', time: '00:17:01' },
  { name: 'WORKPIECE_1', kind: 'wp', time: '00:17:01' },
  { name: 'CAVITY_MILL_3', kind: 'op', tool: 'D16', time: '00:01:33', method: rough, stock: '0.1000', depth: '.5 mm', feed: '1500 mmpm', speed: '4000 rpm' },
  { name: 'CAVITY_MILL_1_1', kind: 'op', tool: 'D10', time: '00:00:58', method: rough, stock: '0.1500', depth: '.3 mm', feed: '1500 mmpm', speed: '4500 rpm' },
  { name: 'CAVITY_MILL_2_1', kind: 'op', tool: 'D6R3', time: '00:04:12', method: rough, stock: '0.1000', depth: '.2 mm', feed: '1500 mmpm', speed: '5000 rpm' },
  { name: 'CONTOUR_AREA_1', kind: 'contour', tool: 'D6R3', time: '00:02:19', method: finish, stock: '0.0000', feed: '2000 mmpm', speed: '5500 rpm' },
  { name: 'ZLEVEL_PROFILE_1', kind: 'op', tool: 'D6R3', time: '00:07:23', method: finish, stock: '0.0000', depth: '.1 mm', feed: '2200 mmpm', speed: '5500 rpm' },
  ...Array.from({ length: 23 }, () => ({})),
];

const Bulb = () => (
  <svg width="8" height="16" viewBox="0 0 8 16" className="block">
    <path d="M1 2 C1 0 7 0 7 2 L5 10 H3Z" fill="#f5e04a" stroke="#8a7a20" strokeWidth="0.7" />
    <ellipse cx="4" cy="13.5" rx="2" ry="2" fill="#f5e04a" stroke="#8a7a20" strokeWidth="0.7" />
  </svg>
);
const OpIcon = () => (
  <Ico s={16} v={16}>
    <path d="M1 3 L4 2 C4 8 8 12 14 12 V15 C6 15 1 11 1 3Z" fill="#17555a" stroke="#0c3a3e" strokeWidth="0.5" />
    <rect x="7" y="0" width="4" height="9" fill="#5566c8" />
    <path d="M11 3h3M11 6h4M11 9h4" stroke="#2a8ae0" strokeWidth="1.2" />
    <rect x="5" y="6" width="9" height="3" fill="#2ab4e8" opacity=".6" />
  </Ico>
);
const ContourIcon = () => (
  <Ico s={16} v={16}>
    <path d="M1 11 C1 8 3 8 5 8 C7 7 9 7 11 8 C14 8 15 10 15 11 C14 13 12 12 10 13 C8 15 4 15 3 13 C2 13 1 12 1 11Z" fill="#fff" stroke="#222" />
    <rect x="6.5" y="0" width="3.5" height="9" fill="#6676cc" />
  </Ico>
);
const McsIcon = () => (
  <svg width="16" height="16" viewBox="0 0 16 16" className="block">
    <path d="M2 9 V2" stroke="#1432a8" strokeWidth="1.2" />
    <path d="M2 9 L9 5" stroke="#20a040" strokeWidth="1.4" />
    <path d="M2 9 L9 13" stroke="#d02a2a" strokeWidth="1.8" />
    <text x="4" y="5" fontSize="6" fill="#111">Z</text>
    <text x="10.5" y="6" fontSize="6" fill="#111">Y</text>
    <text x="11" y="15.5" fontSize="6" fill="#111">X</text>
  </svg>
);
const WpIcon = () => (
  <Ico s={15} v={16}>
    <polygon points="2,5 8,2 15,5 9,8" fill="#b7c9f2" stroke="#4a6ac8" strokeWidth="0.7" />
    <polygon points="2,5 9,8 9,15 2,12" fill="#6f8fe0" stroke="#4a6ac8" strokeWidth="0.7" />
    <polygon points="15,5 9,8 9,15 15,12" fill="#94afee" stroke="#4a6ac8" strokeWidth="0.7" />
    <path d="M5 1 H10 V4" stroke="#4a6ac8" fill="none" strokeDasharray="1 1" />
  </Ico>
);
const FolderIcon = () => (
  <Ico s={15} v={16}>
    <path d="M1 3 H6 L7 1 H12 V3 H15 V15 H1Z" fill="#f8e6a0" stroke="#b8962c" />
    <path d="M7 6 H12 V8.5 H8 V11 H12 V13 H7" fill="none" stroke="#2456c8" strokeWidth="1.3" />
  </Ico>
);
const Check = () => (
  <svg width="14" height="14" viewBox="0 0 14 14" className="block">
    <path d="M0 7 L3.5 4.5 L5.6 7.5 L11 0 L14 1.6 L6.4 13.5 L3.8 13.5Z" fill="#1fb032" />
  </svg>
);
const Expander = () => (
  <div className="flex h-[9px] w-[9px] items-center justify-center border border-[#a8a8a8] bg-white">
    <div className="h-px w-[5px] bg-[#222]" />
  </div>
);

// dotted tree guides for a row, in row-local pixels
const guides = (i: number) => {
  const segs: string[] = [];
  if (i === 1) segs.push('M10.5 10 V20 M10.5 10 H21');
  if (i >= 2 && i <= 8) segs.push('M10.5 0 V20');
  if (i === 9) segs.push('M10.5 0 V6');
  if (i === 3 || i === 10) segs.push('M29.5 0 V6 M34 10 H39');
  if ((i >= 4 && i <= 7) || (i >= 11 && i <= 14)) segs.push('M48.5 0 V20 M48.5 10 H60');
  if (i === 8 || i === 15) segs.push('M48.5 0 V10 H60');
  return segs.join(' ');
};

const Tree = ({ row, i }: { row: TreeRow; i: number }) => {
  const d = guides(i);
  return (
    <div className="relative flex h-full items-center border-r border-black">
      {d && (
        <svg width="70" height="20" className="absolute left-0 top-0">
          <path d={d} fill="none" stroke="#8a8a8a" strokeDasharray="1 1" />
        </svg>
      )}
      {row.kind === 'root' && <span className="pl-[4px] pt-[2px]">{row.name}</span>}
      {row.kind === 'unused' && (
        <div className="flex items-center pl-[21px]"><FolderIcon /><span className="ml-[3px] pt-[2px]">{row.name}</span></div>
      )}
      {row.kind === 'mcs' && (
        <div className="flex items-center pl-[6px]"><div className="relative"><Expander /></div><div className="ml-[5px] w-[16px] pl-[1px]"><McsIcon /></div><span className="ml-[3px] pt-[2px]">{row.name}</span></div>
      )}
      {row.kind === 'wp' && (
        <div className="flex items-center pl-[25px]"><div className="relative"><Expander /></div><div className="ml-[6px]"><WpIcon /></div><span className="ml-[3px] pt-[2px]">{row.name}</span></div>
      )}
      {(row.kind === 'op' || row.kind === 'contour') && (
        <div className="flex items-center pl-[62px]">
          <Bulb />
          <div className="ml-[4px]">{row.kind === 'op' ? <OpIcon /> : <ContourIcon />}</div>
          <span className="ml-[3px] pt-[2px]">{row.name}</span>
        </div>
      )}
    </div>
  );
};

const gridCols = 'grid grid-cols-[325px_40px_50px_105px_100px_69px_100px_100px_100px_18px]';
const Cell = ({ children, c = 'pl-[4px]' }: { children?: React.ReactNode; c?: string }) => (
  <div className={`flex items-center overflow-hidden whitespace-nowrap border-r border-[#ececec] pt-[2px] ${c}`}>{children}</div>
);

const Navigator = () => (
  <div className="flex w-[1025px] shrink-0 flex-col border-r border-[#a0a0a0] bg-white">
    <div className="flex h-[28px] items-center justify-between pl-[10px] pr-[16px] pt-[2px] text-[12px] text-[#1a1a1a]">
      <span>工序导航器 - 几何</span>
      <div className="h-[11px] w-[12px] border border-t-2 border-[#222]" />
    </div>
    <div className="ml-[6px] mr-[9px] flex flex-col border-x border-t border-[#e2e2e2] pt-px">
      <div className={`${gridCols} h-[21px] border-b border-[#d4d4d4] bg-[#f0f0f0] text-[12px] text-[#222]`}>
        {['名称', '刀轨', '刀具', '时间', '方法', '余量', '切削深度', '进给', '速度', ''].map((h, i) => (
          <div key={i} className={`flex items-center border-r border-[#dcdcdc] pt-[2px] ${i === 0 ? 'pl-[7px]' : 'pl-[6px]'}`}>{h}</div>
        ))}
      </div>
      <div className="h-[775px] overflow-hidden text-[12.4px] leading-none text-[#333]">
        {rows.map((row, i) => (
          <div key={i} className={`${gridCols} h-[20px] border-b border-[#ececec] ${i % 2 ? 'bg-[#f9f9f9]' : 'bg-white'}`}>
            <Tree row={row} i={i} />
            <div className="flex items-center border-r border-[#ececec] pl-[6px]">{row.tool && <Check />}</div>
            <Cell c="pl-[3px]">{row.tool}</Cell>
            <Cell>{row.time}</Cell>
            <Cell>{row.method}</Cell>
            <Cell>{row.stock}</Cell>
            <Cell>{row.depth}</Cell>
            <Cell>{row.feed}</Cell>
            <Cell>{row.speed}</Cell>
            <Cell />
          </div>
        ))}
      </div>
      <div className="h-[6px] border border-[#b4b4b4] bg-[#d6d6d6]" />
    </div>
  </div>
);

const EllipseSet = ({ stroke, width, op = 1 }: { stroke: string; width: number; op?: number }) => (
  <g fill="none" stroke={stroke} strokeWidth={width} opacity={op}>
    <ellipse cx="1367" cy="522" rx="58" ry="42" />
    <ellipse cx="1366" cy="522" rx="52" ry="37" />
    <ellipse cx="1370" cy="521" rx="45" ry="32" />
    <ellipse cx="1596" cy="526" rx="58" ry="42" />
    <ellipse cx="1599" cy="526" rx="52" ry="37" />
    <ellipse cx="1595" cy="526" rx="45" ry="32" />
  </g>
);

const outerPath = 'M1371 391 L1595 396 C1660 399 1706 430 1706 477 C1706 520 1660 552 1606 551 L1368 546 C1310 545 1266 510 1266 465 C1266 425 1310 391 1371 391Z';
const wallPath = 'M1371 416 L1600 421 C1650 423 1686 450 1686 487 C1686 510 1680 525 1673 540 L1292 532 C1286 512 1284 495 1284 477 C1284 445 1320 416 1371 416Z';
const filletPath = 'M1368 454 L1592 459 C1640 461 1675 490 1675 517 C1675 545 1650 562 1610 562 L1360 557 C1320 552 1289 530 1289 503 C1289 475 1325 454 1368 454Z';
const underPath = 'M1291 517 C1292 548 1330 572 1373 573 L1595 578 C1640 578 1673 560 1673 533 L1673 520 L1291 510Z';
const floorPatch = 'M1372 482 L1590 486 C1630 487 1660 505 1662 525 C1662 548 1640 556 1610 556 L1360 552 C1325 550 1302 530 1302 510 C1304 495 1335 482 1372 482Z';

const Viewport = () => (
  <div className="relative min-w-0 flex-1 bg-linear-to-b from-[#b2b3b5] via-[#dadadc] to-[#e7e8ea]">
    <svg viewBox="1056 180 863 838" className="block h-full w-full">
      <defs>
        <linearGradient id="backWall" x1="0" x2="0" y1="0" y2="1"><stop offset="0" stopColor="#a0afb5" /><stop offset="1" stopColor="#a7b4b9" /></linearGradient>
        <linearGradient id="floor" x1="0" x2="0" y1="0" y2="1"><stop offset="0" stopColor="#c9dbe1" /><stop offset="1" stopColor="#d0e1e7" /></linearGradient>
        <linearGradient id="wall" x1="0" x2="1" y1="0" y2="0"><stop offset="0" stopColor="#aebbbf" /><stop offset=".22" stopColor="#929ea1" /><stop offset=".8" stopColor="#8e9a9d" /><stop offset="1" stopColor="#a3afb2" /></linearGradient>
        <linearGradient id="fillet" x1="0" x2="0" y1="454" y2="484" gradientUnits="userSpaceOnUse"><stop offset="0" stopColor="#94a1a5" /><stop offset=".5" stopColor="#b5c5ca" /><stop offset="1" stopColor="#cadbe1" /></linearGradient>
        <filter id="soft" x="-20%" y="-40%" width="140%" height="180%"><feGaussianBlur stdDeviation="6" /></filter>
        <filter id="softer" x="-20%" y="-40%" width="140%" height="180%"><feGaussianBlur stdDeviation="3" /></filter>
        <filter id="wide" x="-30%" y="-10%" width="160%" height="120%"><feGaussianBlur stdDeviation="14 0" /></filter>
        <radialGradient id="dome" cx=".58" cy=".88" r=".8"><stop offset="0" stopColor="#e0eef1" /><stop offset=".5" stopColor="#ccdce1" /><stop offset="1" stopColor="#c0d0d6" /></radialGradient>
        <linearGradient id="darkTri" x1="0" x2="0" y1="0" y2="1"><stop offset="0" stopColor="#8a979b" /><stop offset="1" stopColor="#727c7c" /></linearGradient>
        <clipPath id="outerClip"><path d={outerPath} /></clipPath>
        <clipPath id="wallClip"><path d={wallPath} /></clipPath>
        <clipPath id="filletClip"><path d={filletPath} /></clipPath>
      </defs>

      <polygon points="1149,227 1135,434 1156,434" fill="url(#darkTri)" />
      <polygon points="1135,434 1156,434 1163,702 1149,908" fill="#a0afb4" />
      <polygon points="1808,240 1794,447 1801,714 1822,715" fill="#aec0c6" />
      <polygon points="1801,714 1822,715 1807,922" fill="#6f7a7a" />
      <polygon points="1149,227 1808,240 1794,447 1156,434" fill="url(#backWall)" />
      <polygon points="1156,434 1794,447 1801,714 1163,702" fill="url(#floor)" />
      <polygon points="1163,702 1801,714 1807,922 1149,908" fill="#8a9696" />

      <path d={underPath} fill="#b6cad1" stroke="#8fa3aa" strokeWidth="0.8" />
      <path d="M1310 553 C1330 566 1350 569 1373 569 L1595 574 C1620 574 1645 568 1660 552" fill="none" stroke="#d3e2e7" strokeWidth="2" />

      {/* pocket rim: back wall colour above the floor line, floor colour below, dark halo round the opening */}
      <path d={outerPath} fill="#c9dae0" />
      <g clipPath="url(#outerClip)">
        <polygon points="1260,380 1712,390 1712,446 1260,437" fill="#a9b6ba" filter="url(#softer)" />
        <polygon points="1320,411 1650,416 1650,432 1320,426" fill="#586163" filter="url(#soft)" />
        <path d="M1292 500 C1282 470 1310 420 1371 416 L1600 421 C1660 425 1690 470 1680 520" fill="none" stroke="#8b979a" strokeWidth="9" filter="url(#soft)" />
      </g>
      <path d={wallPath} fill="url(#wall)" />
      <g clipPath="url(#wallClip)">
        <polygon points="1322,410 1662,416 1662,444 1322,438" fill="#666e70" filter="url(#wide)" />
        <polygon points="1280,438 1700,446 1700,470 1280,462" fill="#8e9a9d" />
        <polygon points="1280,438 1330,439 1330,470 1280,470" fill="url(#wall)" />
      </g>
      <path d={filletPath} fill="url(#fillet)" />
      <g clipPath="url(#filletClip)">
        <path d={floorPatch} fill="#cfe0e6" filter="url(#softer)" />
      </g>
      <ellipse cx="1370" cy="521" rx="45" ry="32" fill="url(#dome)" />
      <ellipse cx="1595" cy="526" rx="45" ry="32" fill="url(#dome)" />

      <path d="M1284 437 L1686 445" stroke="#4a5355" strokeWidth="0.8" />
      <EllipseSet stroke="#7f9097" width={0.8} />
      <g clipPath="url(#outerClip)"><EllipseSet stroke="#2c3234" width={0.8} /></g>
      <g fill="none" stroke="#2b3032" strokeWidth="0.8">
        <path d={outerPath} />
        <path d="M1292 532 C1286 512 1284 495 1284 477 C1284 445 1320 416 1371 416 L1600 421 C1650 423 1686 450 1686 487 C1686 510 1680 525 1673 540" />
        <path d="M1289 503 C1289 475 1325 454 1368 454 L1592 459 C1640 461 1675 490 1675 517" />
        <path d="M1330 483 C1342 481 1355 480 1368 480 L1592 484 C1610 484 1625 490 1640 500" />
        <path d="M1371 391 L1368 480 M1595 396 L1592 484" />
      </g>
      <g fill="none" stroke="#6f8087" strokeWidth="0.9">
        <path d="M1291 517 C1292 548 1330 572 1373 573 L1595 578 C1640 578 1673 560 1673 533" />
        <path d="M1305 545 C1320 562 1350 568 1373 570 L1595 574" />
        <path d="M1375 542 L1373 573 M1599 547 L1596 578" />
      </g>

      {/* outline of the block */}
      <g fill="none" stroke="#23282a" strokeWidth="1">
        <path d="M1149 227 L1808 240 L1822 715 L1807 922 L1149 908 L1135 434Z" stroke="#4a5254" />
        <path d="M1149 227 L1808 240" />
        <path d="M1163 702 L1801 714" />
        <path d="M1149 908 L1807 922" />
        <path d="M1149 227 L1156 434 L1163 702 L1149 908" stroke="#3b4244" />
        <path d="M1808 240 L1794 447 M1801 714 L1807 922" stroke="#6a7679" />
      </g>
      <path d="M1156 434 L1284 437 M1686 445 L1794 447" stroke="#7e8b90" strokeWidth="1" />
      <path d="M1135 434 L1156 434" stroke="#7e8b90" />

      {/* work coordinate system */}
      <path d="M1150 227 L1151 180" stroke="#1432c8" strokeWidth="2" />
      <path d="M1149 227 L1149 182" stroke="#3a8a3a" strokeWidth="1" />
      <path d="M1149 227 L1236 229" stroke="#d83a3a" strokeWidth="2" />
      <polygon points="1233,224 1251,229 1233,233" fill="#ea3a3a" />
      <text x="1237" y="243" fontSize="12" fill="#e04040" fontFamily="Noto Sans">XM</text>

      {/* orientation triad */}
      <rect x="1123" y="930" width="26" height="39" fill="#d3d4d4" stroke="#c4c4c4" />
      <path d="M1122.5 949 V924" stroke="#e23a3a" strokeWidth="2.6" />
      <polygon points="1120,926 1122.5,919 1125,926" fill="#e23a3a" />
      <path d="M1122 950 V974" stroke="#1a2ea8" strokeWidth="2.6" />
      <polygon points="1119.5,973 1122,979 1124.5,973" fill="#1a2ea8" />
      <path d="M1126 950 H1158" stroke="#2e9a38" strokeWidth="2.6" />
      <polygon points="1157,947 1167,950 1157,953" fill="#2e9a38" />
      <circle cx="1122.5" cy="949.5" r="4" fill="#e4e4e4" stroke="#9a9a9a" />
      <text x="1118" y="919" fontSize="11" fill="#e05050" fontFamily="Noto Sans">X</text>
      <text x="1169" y="956" fontSize="11" fill="#3aa048" fontFamily="Noto Sans">Y</text>
      <text x="1117" y="991" fontSize="11" fill="#4a6ae0" fontFamily="Noto Sans">Z</text>

      {/* floating badge */}
      <circle cx="1923" cy="583" r="23" fill="#36c054" stroke="#e8e8e8" strokeWidth="2" />
      <text x="1904" y="588" fontSize="12" fill="#fff" fontFamily="Noto Sans">37</text>
    </svg>
  </div>
);

// the real taskbar is 40px tall, the capture cuts it off at the bottom
const Taskbar = () => (
  <div className="relative h-[31px] overflow-hidden bg-[#15191d] text-white">
    <div className="flex h-[40px] items-center">
      <Slot w="w-[46px]"><svg width="16" height="16" viewBox="0 0 16 16"><path d="M0 2.3 L6.6 1.4 V7.6 H0Z M7.4 1.3 L16 0 V7.6 H7.4Z M0 8.4 H6.6 V14.6 L0 13.7Z M7.4 8.4 H16 V16 L7.4 14.7Z" fill="#fff" /></svg></Slot>
      <Slot w="w-[54px]"><svg width="22" height="22" viewBox="0 0 22 22"><g fill="#e8e8e8"><path d="M11 10 C6 9 5 3 9 1 C13 0 15 5 11 10Z" /><path d="M12 11 C13 6 19 5 21 9 C22 13 17 15 12 11Z" /><path d="M11 12 C16 13 17 19 13 21 C9 22 7 17 11 12Z" /><path d="M10 11 C9 16 3 17 1 13 C0 9 5 7 10 11Z" /></g></svg></Slot>
      <Slot w="w-[56px]" c="pr-[6px]"><svg width="22" height="22" viewBox="0 0 22 22"><path d="M3 12 C3 6 8 4 12 4 C16 4 19 7 19 12 H7 C7 16 12 18 18 15 V18 C10 21 3 18 3 12Z M7 9.5 H15 C15 7 9 6 7 9.5Z" fill="#e8e8e8" /><path d="M2 20 C0 14 10 3 21 1" stroke="#e8e8e8" fill="none" /></svg></Slot>
      <div className="flex h-full w-[48px] items-center justify-center bg-[#3d4146]">
        <svg width="26" height="26" viewBox="0 0 26 26"><circle cx="12" cy="15" r="9" fill="#1a8ae0" /><path d="M5 15 C8 9 14 10 17 14 C15 20 9 22 6 19Z" fill="#2cc06a" /><polygon points="5,1 17,1 12,11" fill="#d8283c" /><path d="M2 24 C10 25 22 18 24 8 C24 6 22 5 21 5 C23 9 14 20 2 24Z" fill="#f2a51c" /></svg>
      </div>
      <Slot w="w-[48px]"><svg width="22" height="19" viewBox="0 0 22 19"><path d="M0 1 H8 L10 3 H22 V19 H0Z" fill="#f8d878" /><path d="M0 5 H22" stroke="#e8b840" /><rect x="7" y="12" width="8" height="7" fill="#3aa8e8" /><rect x="10" y="15" width="2" height="4" fill="#f8d878" /></svg></Slot>
      <Slot w="w-[52px]"><svg width="24" height="24" viewBox="0 0 24 24"><circle cx="11" cy="13" r="10" fill="#6cc43a" /><path d="M5 13 H17 C17 8 6 8 5 13 C5 19 13 20 18 16" fill="none" stroke="#fff" strokeWidth="2.2" /><path d="M2 22 C4 14 12 3 22 2" fill="none" stroke="#2a8a2a" /></svg></Slot>
      <div className="ml-[50px]"><svg width="16" height="20" viewBox="0 0 16 20"><circle cx="8" cy="7" r="4" fill="#050505" /><ellipse cx="8" cy="15" rx="7" ry="6" fill="#050505" /></svg></div>

      <div className="ml-auto flex items-center">
        <svg width="11" height="18" viewBox="0 0 11 18"><rect x="2" y="0" width="7" height="5" fill="#ddd" /><rect x="0" y="4" width="11" height="14" fill="#3aa83a" /><path d="M5.5 7 V15 M3 10 L5.5 14 L8 10" stroke="#fff" fill="none" /></svg>
        <div className="ml-[17px]"><svg width="12" height="8" viewBox="0 0 12 8"><path d="M0.5 7.5 L6 1.5 L11.5 7.5" stroke="#e8e8e8" fill="none" strokeWidth="1.2" /></svg></div>
        <div className="ml-[10px]"><svg width="15" height="15" viewBox="0 0 15 15"><circle cx="7.5" cy="7.5" r="7" fill="#6cc43a" /><path d="M3 7.5 H11 C11 4 4 4 3 7.5 C3 11 9 12 12 10" fill="none" stroke="#fff" strokeWidth="1.4" /></svg></div>
        <div className="ml-[9px]"><svg width="16" height="16" viewBox="0 0 16 16"><circle cx="8" cy="8" r="7.5" fill="#d8c20c" /><path d="M8 3.5 V12.5 M3.5 8 H12.5" stroke="#0a4a0a" strokeWidth="2.6" /></svg></div>
        <div className="ml-[8px]"><svg width="14" height="16" viewBox="0 0 14 16"><ellipse cx="7" cy="10" rx="5" ry="5.5" fill="#111" /><ellipse cx="7" cy="11" rx="3" ry="4" fill="#fff" /><circle cx="7" cy="4" r="3.5" fill="#111" /><rect x="2" y="7" width="10" height="2" fill="#d8201c" /><ellipse cx="4" cy="15" rx="3" ry="1" fill="#f2a51c" /><ellipse cx="10" cy="15" rx="3" ry="1" fill="#f2a51c" /></svg></div>
        <div className="ml-[10px]"><svg width="17" height="13" viewBox="0 0 17 13"><path d="M1 4.5 H4 L8 1 V12 L4 8.5 H1Z M11 4 C12 6 12 7 11 9 M13.5 2 C15.5 5 15.5 8 13.5 11" fill="none" stroke="#e8e8e8" /></svg></div>
        <div className="ml-[7px]"><svg width="17" height="14" viewBox="0 0 17 14"><path d="M4 1 H16 V10 H9 M1 5 H7 V13 H1Z M3 5 V3" fill="none" stroke="#e8e8e8" /></svg></div>
        <span className="ml-[7px] w-[16px] text-[14px]">英</span>
        <div className="ml-[12px] flex h-[14px] w-[14px] items-center justify-center bg-white text-[12px] font-bold leading-none text-black">M</div>
        <div className="ml-[19px] flex w-[60px] flex-col items-center text-[12px] leading-[19px] text-[#eeeeee]">
          <span>15:32</span>
          <span className="whitespace-nowrap">2018/3/7</span>
        </div>
        <div className="ml-[18px] mr-[24px]"><svg width="16" height="15" viewBox="0 0 16 15"><path d="M0.5 0.5 H15.5 V11.5 H10 L8 14 L6 11.5 H0.5Z" fill="none" stroke="#eeeeee" /></svg></div>
      </div>
    </div>
  </div>
);

const Watermark = () => (
  <>
    <svg width="72" height="78" viewBox="0 0 72 78" className="absolute left-[1636px] top-[976px]">
      <polygon points="36,0 71,19 71,57 36,77 1,57 1,19" fill="#3aa6e8" opacity=".55" />
      <path d="M36 0 L71 19 L52 14 C40 8 20 16 14 34 L1 19Z" fill="#fff" opacity=".4" />
      <path d="M1 57 C8 66 24 72 36 64 L36 77Z" fill="#1c6fb0" opacity=".4" />
      <polygon points="36,14 58,27 58,51 36,64 14,51 14,27" fill="none" stroke="#eaf6fd" strokeWidth="5" opacity=".8" />
      <polygon points="36,24 50,32 36,40 22,32" fill="#bfe3f8" opacity=".9" />
      <polygon points="22,32 36,40 36,56 22,48" fill="#7fc6f0" opacity=".9" />
      <polygon points="50,32 36,40 36,56 50,48" fill="#6ab8ec" opacity=".9" />
    </svg>
    <span className="absolute left-[1716px] top-[984px] whitespace-nowrap text-[43px] font-bold leading-[50px] text-white opacity-35">3D世界网</span>
    <span className="absolute left-[1717px] top-[1032px] whitespace-nowrap text-[17px] leading-[18px] tracking-[3px] text-white opacity-30">WWW.3DSJW.COM</span>
  </>
);

export default function App() {
  return (
    <div className="relative flex h-[1071px] w-[1919px] flex-col overflow-hidden bg-white font-['Noto_Sans','Noto_Sans_CJK_SC',sans-serif]">
      <TitleBar />
      <TabBar />
      <Ribbon />
      <Toolbar />
      <div className="flex h-[839px] border-b border-[#a4a4a4]">
        <Rail />
        <Navigator />
        <Viewport />
      </div>
      <div className="flex h-[21px] items-center justify-end bg-white pr-[56px]">
        <Ico s={15} v={16}><path d="M1 4 V1 H4 M12 1 H15 V4 M15 12 V15 H12 M4 15 H1 V12" stroke="#999" fill="none" /><rect x="3" y="3" width="10" height="10" fill="#fff" stroke="#777" /><rect x="4.5" y="5.5" width="7" height="5.5" fill="#5a8ad0" /></Ico>
      </div>
      <Taskbar />
      <Watermark />
    </div>
  );
}
